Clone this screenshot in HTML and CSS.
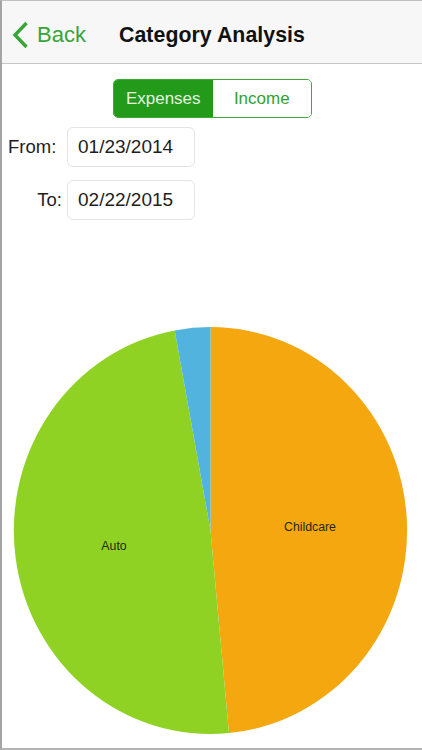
FILE: index.html
```html
<!DOCTYPE html>
<html lang="en">
<head>
<meta charset="utf-8">
<title>Category Analysis</title>
<link rel="stylesheet" href="styles.css">
</head>
<body>
<div class="screen">
  <header class="nav">
    <div class="nav-left">
      <a class="back" href="#">
        <svg class="chevron" width="18" height="28" viewBox="0 0 18 28" aria-hidden="true">
          <polyline points="14.5,2 3,14 14.5,26" fill="none" stroke="#36a636" stroke-width="3.4" stroke-linejoin="miter" stroke-linecap="butt"/>
        </svg>
        <span>Back</span>
      </a>
    </div>
    <h1 class="title">Category Analysis</h1>
    <div class="nav-right"></div>
  </header>

  <div class="segment-wrap">
    <div class="segment">
      <div class="seg seg-active">Expenses</div>
      <div class="seg">Income</div>
    </div>
  </div>

  <div class="dates">
    <div class="date-row">
      <div class="label">From:</div>
      <div class="field">01/23/2014</div>
    </div>
    <div class="date-row">
      <div class="label label-right">To:</div>
      <div class="field">02/22/2015</div>
    </div>
  </div>

  <svg class="chart" width="420" height="528" viewBox="0 0 420 528">
    <g transform="translate(208.5 310.5) scale(196.5 203.5)">
      <path d="M0,0 L0,-1 A1,1 0 0 1 0.0941,0.9956 Z" fill="#f4a70f"/>
      <path d="M0,0 L0.0941,0.9956 A1,1 0 0 1 -0.1822,-0.9833 Z" fill="#8fd224"/>
      <path d="M0,0 L-0.1822,-0.9833 A1,1 0 0 1 0,-1 Z" fill="#53b3df"/>
    </g>
    <text class="slice-label" x="308" y="307">Childcare</text>
    <text class="slice-label" x="112" y="326">Auto</text>
  </svg>
</div>
</body>
</html>
```

FILE: styles.css
```css
html, body {
  margin: 0;
  padding: 0;
  background: #ffffff;
}

body {
  font-family: "Liberation Sans", Arial, Helvetica, sans-serif;
  color: #1a1a1a;
}

.screen {
  width: 420px;
  height: 747px;
  border-left: 2px solid #a4a4a4;
  border-top: 1px solid #c0c0c0;
  border-bottom: 2px solid #b4b4b4;
  overflow: hidden;
  background: #ffffff;
}

.nav {
  height: 63px;
  box-sizing: border-box;
  padding-top: 6px;
  background: #f7f7f7;
  border-bottom: 1px solid #c6c6c6;
  display: grid;
  grid-template-columns: 1fr auto 1fr;
  align-items: center;
}

.nav-left {
  display: flex;
  align-items: center;
}

.back {
  display: flex;
  align-items: center;
  gap: 7px;
  padding-left: 10px;
  color: #36a636;
  text-decoration: none;
  font-size: 22px;
}

.chevron {
  display: block;
}

.title {
  margin: 0;
  font-size: 21.3px;
  font-weight: bold;
  color: #111111;
  letter-spacing: 0.05px;
}

.segment-wrap {
  display: flex;
  justify-content: center;
  padding-top: 15px;
  padding-left: 1px;
}

.segment {
  display: flex;
  width: 199px;
  height: 39px;
  box-sizing: border-box;
  border: 1px solid #3ea83a;
  border-radius: 5px;
  overflow: hidden;
}

.seg {
  flex: 1;
  display: flex;
  align-items: center;
  justify-content: center;
  font-size: 17px;
  color: #33a22d;
  background: #ffffff;
}

.seg-active {
  background: #239a19;
  color: #e4f3e2;
}

.dates {
  display: flex;
  flex-direction: column;
  gap: 13px;
  padding-top: 9px;
  padding-left: 6px;
}

.date-row {
  display: flex;
  align-items: center;
  gap: 5px;
  height: 40px;
}

.label {
  width: 54px;
  font-size: 18.5px;
  color: #1e1e1e;
  text-align: left;
}

.label-right {
  text-align: right;
}

.field {
  width: 128px;
  height: 40px;
  box-sizing: border-box;
  border: 1px solid #e4e4e4;
  border-radius: 6px;
  display: flex;
  align-items: center;
  padding-left: 10px;
  font-size: 19px;
  color: #1e1e1e;
}

.chart {
  display: block;
}

.slice-label {
  font-family: "Liberation Sans", Arial, Helvetica, sans-serif;
  font-size: 12.3px;
  fill: #1f2a10;
  text-anchor: middle;
  dominant-baseline: central;
}
```
